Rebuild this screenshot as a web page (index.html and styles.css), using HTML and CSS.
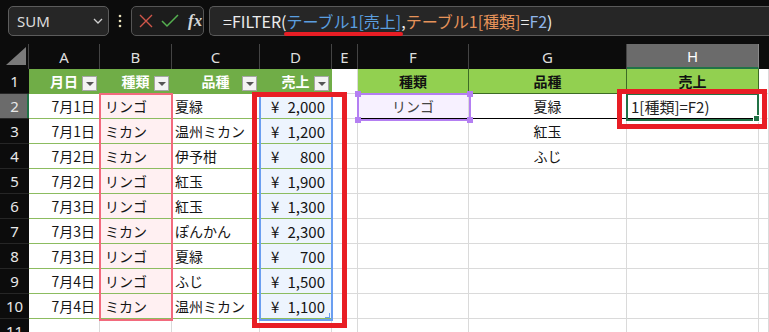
FILE: index.html
```html
<!DOCTYPE html>
<html lang="ja">
<head>
  <meta charset="UTF-8" />
  <title>FILTER - Excel</title>
  <link rel="stylesheet" href="styles.css">
</head>
<body>

  <div class="fbar">
    <div class="namebox">
      <span>SUM</span>
      <svg width="10" height="6" viewBox="0 0 10 6"><polyline points="1,1 5,5 9,1" fill="none" stroke="#cfcfcf" stroke-width="1.3"/></svg>
    </div>
    <svg class="grip" width="4" height="14" viewBox="0 0 4 14"><circle cx="2" cy="2" r="1.3" fill="#e8dfb8"/><circle cx="2" cy="7" r="1.3" fill="#e8dfb8"/><circle cx="2" cy="12" r="1.3" fill="#e8dfb8"/></svg>
    <div class="fxbox">
      <svg width="14" height="14" viewBox="0 0 14 14"><path d="M1 1 L13 13 M13 1 L1 13" stroke="#d0564a" stroke-width="1.4" fill="none"/></svg>
      <svg width="18" height="14" viewBox="0 0 18 14"><polyline points="1,7 6,12 17,1" fill="none" stroke="#55b050" stroke-width="1.5"/></svg>
      <span class="fx">fx</span>
    </div>
    <div class="formula">
      <span>=FILTER(</span><span class="blue hl">テーブル1[売上]</span><span>,</span><span class="orange">テーブル1[種類]</span><span>=</span><span class="ref">F2</span><span>)</span>
    </div>
  </div>

  <div class="sheet-wrap">
    <div class="sheet">
      <!-- column headers -->
      <div class="corner"><svg width="20" height="18" viewBox="0 0 20 18"><polygon points="20,0 20,18 0,18" fill="#7a7a7a"/></svg></div>
      <div class="ch">A</div><div class="ch">B</div><div class="ch">C</div><div class="ch">D</div>
      <div class="ch">E</div><div class="ch">F</div><div class="ch">G</div><div class="ch act">H</div><div class="ch last"></div>

      <!-- row 1 -->
      <div class="rh">1</div>
      <div class="c th">月日<i class="dd"></i></div>
      <div class="c th">種類<i class="dd"></i></div>
      <div class="c th">品種<i class="dd"></i></div>
      <div class="c th">売上<i class="dd"></i></div>
      <div class="c"></div>
      <div class="c th2">種類</div><div class="c th2">品種</div><div class="c th2">売上</div><div class="c"></div>

      <!-- row 2 -->
      <div class="rh act">2</div>
      <div class="c tb r">7月1日</div><div class="c tb kb">リンゴ</div><div class="c tb">夏緑</div>
      <div class="c tb kd"><span>¥</span><span>2,000</span></div>
      <div class="c"></div>
      <div class="c m spl kf">リンゴ</div><div class="c m spl">夏緑</div><div class="c spl edit">1[種類]=F2)</div><div class="c"></div>

      <!-- row 3 -->
      <div class="rh">3</div>
      <div class="c tb r">7月1日</div><div class="c tb kb">ミカン</div><div class="c tb">温州ミカン</div>
      <div class="c tb kd"><span>¥</span><span>1,200</span></div>
      <div class="c"></div><div class="c"></div><div class="c m">紅玉</div><div class="c"></div><div class="c"></div>

      <!-- row 4 -->
      <div class="rh">4</div>
      <div class="c tb r">7月2日</div><div class="c tb kb">ミカン</div><div class="c tb">伊予柑</div>
      <div class="c tb kd"><span>¥</span><span>800</span></div>
      <div class="c"></div><div class="c"></div><div class="c m">ふじ</div><div class="c"></div><div class="c"></div>

      <!-- row 5 -->
      <div class="rh">5</div>
      <div class="c tb r">7月2日</div><div class="c tb kb">リンゴ</div><div class="c tb">紅玉</div>
      <div class="c tb kd"><span>¥</span><span>1,900</span></div>
      <div class="c"></div><div class="c"></div><div class="c"></div><div class="c"></div><div class="c"></div>

      <!-- row 6 -->
      <div class="rh">6</div>
      <div class="c tb r">7月3日</div><div class="c tb kb">リンゴ</div><div class="c tb">紅玉</div>
      <div class="c tb kd"><span>¥</span><span>1,300</span></div>
      <div class="c"></div><div class="c"></div><div class="c"></div><div class="c"></div><div class="c"></div>

      <!-- row 7 -->
      <div class="rh">7</div>
      <div class="c tb r">7月3日</div><div class="c tb kb">ミカン</div><div class="c tb">ぽんかん</div>
      <div class="c tb kd"><span>¥</span><span>2,300</span></div>
      <div class="c"></div><div class="c"></div><div class="c"></div><div class="c"></div><div class="c"></div>

      <!-- row 8 -->
      <div class="rh">8</div>
      <div class="c tb r">7月3日</div><div class="c tb kb">リンゴ</div><div class="c tb">夏緑</div>
      <div class="c tb kd"><span>¥</span><span>700</span></div>
      <div class="c"></div><div class="c"></div><div class="c"></div><div class="c"></div><div class="c"></div>

      <!-- row 9 -->
      <div class="rh">9</div>
      <div class="c tb r">7月4日</div><div class="c tb kb">リンゴ</div><div class="c tb">ふじ</div>
      <div class="c tb kd"><span>¥</span><span>1,500</span></div>
      <div class="c"></div><div class="c"></div><div class="c"></div><div class="c"></div><div class="c"></div>

      <!-- row 10 -->
      <div class="rh">10</div>
      <div class="c tb r">7月4日</div><div class="c tb kb">ミカン</div><div class="c tb">温州ミカン</div>
      <div class="c tb kd"><span>¥</span><span>1,100</span></div>
      <div class="c"></div><div class="c"></div><div class="c"></div><div class="c"></div><div class="c"></div>

      <!-- row 11 -->
      <div class="rh">11</div>
      <div class="c"></div><div class="c"></div><div class="c"></div><div class="c"></div>
      <div class="c"></div><div class="c"></div><div class="c"></div><div class="c"></div><div class="c"></div>
    </div>

    <!-- reference highlights and selection -->
    <div class="ref-b"></div>
    <div class="ref-d"><i class="corner-mark"></i></div>
    <div class="sel-f"><i class="h tl"></i><i class="h tr"></i><i class="h bl"></i><i class="h br"></i></div>
    <div class="sel-h"><i class="fill"></i></div>

    <!-- annotation boxes -->
    <div class="mark mark-d"></div>
    <div class="mark mark-h"></div>
  </div>

</body>
</html>
```

FILE: styles.css
```css
body {
  margin: 0;
  background: #0c0c0c;
  width: 769px;
  height: 332px;
  overflow: hidden;
  font-family: 'Noto Sans CJK JP', 'Noto Sans', sans-serif;
}

/* formula bar */
.fbar {
  display: flex;
  align-items: flex-start;
  height: 44px;
  padding: 6px 0 0 8px;
  box-sizing: border-box;
}

.namebox {
  width: 101px;
  height: 30px;
  box-sizing: border-box;
  display: flex;
  align-items: center;
  justify-content: space-between;
  padding: 0 5px 0 8px;
  background: #262626;
  border: 1px solid #5c5c5c;
  border-radius: 5px;
  color: #dcdcdc;
  font-family: 'Noto Sans', sans-serif;
  font-size: 15px;
}

.grip {
  margin: 8px 9px 0 9px;
}

.fxbox {
  width: 73px;
  height: 30px;
  box-sizing: border-box;
  display: flex;
  align-items: center;
  gap: 8px;
  padding: 0 0 0 7px;
  background: #1c1c1c;
  border: 1px solid #555;
  border-radius: 5px;
}

.fx {
  font-family: 'Liberation Serif', serif;
  font-style: italic;
  font-weight: bold;
  font-size: 17px;
  color: #d6d6d6;
  margin-left: 1px;
}

.formula {
  flex: 1;
  margin-left: 5px;
  height: 30px;
  box-sizing: border-box;
  display: flex;
  align-items: center;
  padding-left: 13px;
  background: #262626;
  border: 1px solid #5a5a5a;
  border-right: none;
  border-radius: 5px 0 0 5px;
  color: #ececec;
  font-size: 16px;
  line-height: 20px;
  white-space: nowrap;
}

.blue { color: #5b9fe0; }
.orange { color: #e6935a; }
.ref { color: #8fb6ea; }

.hl {
  position: relative;
}

.hl::after {
  content: '';
  position: absolute;
  left: -3px;
  right: -2px;
  bottom: -5px;
  height: 4px;
  border-radius: 2px;
  background: #e81e25;
}

/* sheet */
.sheet-wrap {
  position: relative;
}

.sheet {
  display: grid;
  grid-template-columns: 29px 71px 72px 88px 72px 26px 111px 158px 132px 1fr;
  grid-auto-rows: 25px;
}

.corner {
  display: flex;
  align-items: flex-end;
  justify-content: flex-end;
  padding: 0 2px 4px 0;
  border-right: 1px solid #444;
}

.ch {
  display: flex;
  align-items: center;
  justify-content: center;
  border-right: 1px solid #444;
  color: #dedede;
  font-family: 'Noto Sans', sans-serif;
  font-size: 15px;
}

.ch.act {
  background: #6b6b6b;
  color: #fff;
  border-right: 1px solid #8a8a8a;
  border-bottom: 2px solid #217346;
}

.ch.last {
  border-right: none;
}

.rh {
  display: flex;
  align-items: center;
  justify-content: center;
  border-bottom: 1px solid #262626;
  color: #e8e8e8;
  font-family: 'Noto Sans', sans-serif;
  font-size: 15px;
}

.rh.act {
  background: #6b6b6b;
  box-shadow: inset -2px 0 #217346;
}

.c {
  position: relative;
  display: flex;
  align-items: center;
  padding: 0 3px;
  background: #fff;
  border-right: 1px solid #dadada;
  border-bottom: 1px solid #dadada;
  color: #151515;
  font-size: 14px;
  white-space: nowrap;
  overflow: hidden;
}

.r { justify-content: flex-end; padding-right: 4px; }
.m { justify-content: center; }

.th {
  justify-content: center;
  background: #70ad47;
  border-right-color: #70ad47;
  border-bottom-color: #70ad47;
  color: #fff;
  font-weight: bold;
}

.dd {
  position: absolute;
  right: 2px;
  bottom: 2px;
  width: 15px;
  height: 15px;
  box-sizing: border-box;
  background: #f3f3f3;
  border: 1px solid #a6a6a6;
}

.dd::after {
  content: '';
  position: absolute;
  left: 3px;
  top: 5px;
  border-left: 4px solid transparent;
  border-right: 4px solid transparent;
  border-top: 4px solid #555;
}

.th2 {
  justify-content: center;
  background: #92d050;
  border-right-color: #3d6b26;
  border-bottom-color: #3d6b26;
  color: #111;
  font-weight: bold;
}

.tb {
  border-bottom-color: #8cbc60;
}

.kb {
  background: #fff0f2;
  padding-left: 5px;
}

.kd {
  justify-content: space-between;
  background: #edf4fe;
  padding: 0 6px 0 11px;
  font-size: 15px;
}

.kf {
  background: #f7f1ff;
  color: #444;
}

.spl {
  border-bottom-color: #000;
}

.edit {
  padding-left: 4px;
  color: #222;
  font-size: 15px;
}

.ref-b,
.ref-d,
.sel-f,
.sel-h,
.mark {
  position: absolute;
  box-sizing: border-box;
}

.ref-b {
  left: 99px;
  top: 49px;
  width: 74px;
  height: 228px;
  border: 2px solid #f26a7d;
}

.ref-d {
  left: 259px;
  top: 49px;
  width: 74px;
  height: 228px;
  border: 2px solid #6a9ef0;
}

.corner-mark {
  position: absolute;
  right: 1px;
  bottom: 1px;
  width: 4px;
  height: 4px;
  border-right: 1px solid #6a9ef0;
  border-bottom: 1px solid #6a9ef0;
}

.sel-f {
  left: 357px;
  top: 49px;
  width: 114px;
  height: 28px;
  border: 2px solid #b47ff2;
}

.h {
  position: absolute;
  width: 6px;
  height: 6px;
  background: #b47ff2;
}

.tl { left: -4px; top: -4px; }
.tr { right: -4px; top: -4px; }
.bl { left: -4px; bottom: -4px; }
.br { right: -4px; bottom: -4px; }

.sel-h {
  left: 626px;
  top: 49px;
  width: 133px;
  height: 28px;
  border: 2px solid #217346;
}

.fill {
  position: absolute;
  right: -3px;
  bottom: -3px;
  width: 5px;
  height: 5px;
  background: #217346;
  border: 1px solid #fff;
}

.mark {
  border: 5px solid #e81e25;
}

.mark-d {
  left: 252px;
  top: 48px;
  width: 95px;
  height: 236px;
}

.mark-h {
  left: 617px;
  top: 45px;
  width: 150px;
  height: 40px;
}
```
